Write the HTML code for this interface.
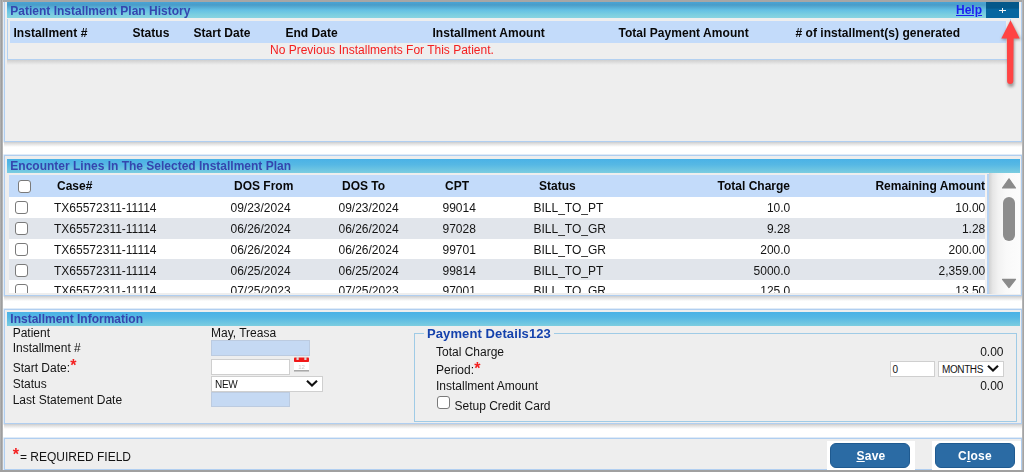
<!DOCTYPE html>
<html><head><meta charset="utf-8">
<style>
*{box-sizing:border-box;margin:0;padding:0}
html,body{width:1024px;height:472px;overflow:hidden}
#wrap{position:absolute;left:0;top:0;width:1024px;height:472px;filter:blur(0.3px)}
body{position:relative;background:#ffffff;font-family:"Liberation Sans",sans-serif;font-size:12px;color:#141414}
.a{position:absolute}
.t{position:absolute;white-space:nowrap;line-height:14px}
.b{font-weight:bold;color:#080808}
.gl{left:0;top:0;width:3px;height:472px;background:linear-gradient(to right,#b8b8b8,#999 60%,#c8c8c8)}
.gt{left:0;top:0;width:1024px;height:2px;background:#a6a6a6}
.gr{left:1022px;top:0;width:2px;height:472px;background:linear-gradient(to right,#c0c0c0,#9a9a9a)}
.gb{left:0;top:470px;width:1024px;height:2px;background:#a0a0a0}
.panel{position:absolute;background:#eeeeee;border:1px solid #b0cef0;box-shadow:0 0 0 0.6px rgba(180,208,240,0.7)}
.hdr{position:absolute;background:linear-gradient(to bottom,#4ab2e6 0%,#56b8e4 40%,#7ccde0 100%)}
.hdr1{background:linear-gradient(to bottom,#48a4d6 0%,#4a9cc8 18%,#64c0e4 50%,#7ccfe0 80%,#88d4e2 100%)}
.hdrt{position:absolute;white-space:nowrap;font-weight:bold;color:#3446ae;font-size:12px;line-height:14px}
.colh{position:absolute;background:#c3dbfa}
.row{position:absolute;left:9px;width:977px}
.cb{position:absolute;width:13px;height:13px;border:1px solid #7a7a7a;border-radius:3px;background:#fff}
.red{color:#f42020}
.inp{position:absolute;border:1px solid #cfcfcf;background:#fff}
.inpb{position:absolute;border:1px solid #bccbe0;background:#c5d9f3}
.btn{position:absolute;background:#2b6ba4;border-radius:6px;color:#fff;font-weight:bold;font-size:12px;letter-spacing:0.25px;text-align:center;border:1px solid #1f5a90}
.shadow{position:absolute;height:5px;background:linear-gradient(to bottom,#cfcfcf,rgba(255,255,255,0))}
</style></head><body><div id="wrap">


<!-- ============ PANEL 1 ============ -->
<div class="panel" style="left:4px;top:1px;width:1018px;height:141px"></div>
<div class="hdr hdr1" style="left:7px;top:2px;width:1012px;height:16.2px"></div>
<div class="hdrt" style="left:10.3px;top:3.5px">Patient Installment Plan History</div>
<div class="t b" style="left:956px;top:3px;color:#1c1ef0;text-decoration:underline">Help</div>
<div class="a" style="left:985.8px;top:2px;width:33.6px;height:15.8px;background:linear-gradient(to bottom,#05588a 0%,#05588a 38%,#0766a0 45%,#0766a0 100%)"></div>
<div class="a" style="left:999.2px;top:10px;width:6.4px;height:1.4px;background:#f4f4f4"></div>
<div class="a" style="left:1001.7px;top:7.9px;width:1.4px;height:5.4px;background:#f4f4f4"></div>
<div class="a" style="left:7px;top:19px;width:1004px;height:41px;background:#eeeeee;border:1px solid #b3d0f0;border-top:none"></div>
<div class="shadow" style="left:7px;top:60px;width:1004px"></div>
<div class="colh" style="left:10px;top:20.7px;width:996px;height:22px"></div>
<div class="t b" style="left:13.4px;top:25.8px;letter-spacing:0.05px">Installment #</div>
<div class="t b" style="left:132.4px;top:25.8px;letter-spacing:0.05px">Status</div>
<div class="t b" style="left:193.4px;top:25.8px;letter-spacing:0.05px">Start Date</div>
<div class="t b" style="left:285.4px;top:25.8px;letter-spacing:0.05px">End Date</div>
<div class="t b" style="left:432.4px;top:25.8px;letter-spacing:0.05px">Installment Amount</div>
<div class="t b" style="left:618.4px;top:25.8px;letter-spacing:0.05px">Total Payment Amount</div>
<div class="t b" style="left:795.4px;top:25.8px;letter-spacing:0.05px">&#35; of installment(s) generated</div>
<div class="t red" style="left:270px;top:42.7px">No Previous Installments For This Patient.</div>

<div class="shadow" style="left:4px;top:142px;width:1018px"></div>

<!-- ============ PANEL 2 ============ -->
<div class="panel" style="left:4px;top:155px;width:1018px;height:141px"></div>
<div class="hdr" style="left:7px;top:159px;width:1013px;height:13.8px"></div>
<div class="hdrt" style="left:10.3px;top:159px">Encounter Lines In The Selected Installment Plan</div>
<div class="colh" style="left:9px;top:174.8px;width:976px;height:21.8px"></div>
<div class="cb" style="left:18px;top:180px"></div>
<div class="t b" style="left:57px;top:179px">Case#</div>
<div class="t b" style="left:234px;top:179px">DOS From</div>
<div class="t b" style="left:342px;top:179px">DOS To</div>
<div class="t b" style="left:445px;top:179px">CPT</div>
<div class="t b" style="left:539px;top:179px">Status</div>
<div class="t b" style="left:690px;top:179px;width:100px;text-align:right">Total Charge</div>
<div class="t b" style="left:835px;top:179px;width:150px;text-align:right">Remaining Amount</div>

<div class="a" style="left:9px;top:196.5px;width:976px;height:96px;overflow:hidden">
<div class="a" style="left:0;top:0.0px;width:977px;height:21px;background:#ffffff">
<div class="cb" style="left:6px;top:4.5px"></div>
<div class="t" style="left:45px;top:4.6px">TX65572311-11114</div>
<div class="t" style="left:221.5px;top:4.6px">09/23/2024</div>
<div class="t" style="left:329.5px;top:4.6px">09/23/2024</div>
<div class="t" style="left:433.5px;top:4.6px">99014</div>
<div class="t" style="left:524.5px;top:4.6px">BILL_TO_PT</div>
<div class="t" style="left:681.3px;top:4.6px;width:100px;text-align:right">10.0</div>
<div class="t" style="left:876.3px;top:4.6px;width:100px;text-align:right">10.00</div>
</div>
<div class="a" style="left:0;top:21.0px;width:977px;height:21px;background:#e1e5eb">
<div class="cb" style="left:6px;top:4.5px"></div>
<div class="t" style="left:45px;top:4.6px">TX65572311-11114</div>
<div class="t" style="left:221.5px;top:4.6px">06/26/2024</div>
<div class="t" style="left:329.5px;top:4.6px">06/26/2024</div>
<div class="t" style="left:433.5px;top:4.6px">97028</div>
<div class="t" style="left:524.5px;top:4.6px">BILL_TO_GR</div>
<div class="t" style="left:681.3px;top:4.6px;width:100px;text-align:right">9.28</div>
<div class="t" style="left:876.3px;top:4.6px;width:100px;text-align:right">1.28</div>
</div>
<div class="a" style="left:0;top:42.0px;width:977px;height:21px;background:#ffffff">
<div class="cb" style="left:6px;top:4.5px"></div>
<div class="t" style="left:45px;top:4.6px">TX65572311-11114</div>
<div class="t" style="left:221.5px;top:4.6px">06/26/2024</div>
<div class="t" style="left:329.5px;top:4.6px">06/26/2024</div>
<div class="t" style="left:433.5px;top:4.6px">99701</div>
<div class="t" style="left:524.5px;top:4.6px">BILL_TO_GR</div>
<div class="t" style="left:681.3px;top:4.6px;width:100px;text-align:right">200.0</div>
<div class="t" style="left:876.3px;top:4.6px;width:100px;text-align:right">200.00</div>
</div>
<div class="a" style="left:0;top:62.5px;width:977px;height:21px;background:#e1e5eb">
<div class="cb" style="left:6px;top:4.5px"></div>
<div class="t" style="left:45px;top:4.6px">TX65572311-11114</div>
<div class="t" style="left:221.5px;top:4.6px">06/25/2024</div>
<div class="t" style="left:329.5px;top:4.6px">06/25/2024</div>
<div class="t" style="left:433.5px;top:4.6px">99814</div>
<div class="t" style="left:524.5px;top:4.6px">BILL_TO_PT</div>
<div class="t" style="left:681.3px;top:4.6px;width:100px;text-align:right">5000.0</div>
<div class="t" style="left:876.3px;top:4.6px;width:100px;text-align:right">2,359.00</div>
</div>
<div class="a" style="left:0;top:83.30000000000001px;width:977px;height:21px;background:#ffffff">
<div class="cb" style="left:6px;top:4.5px"></div>
<div class="t" style="left:45px;top:4.6px">TX65572311-11114</div>
<div class="t" style="left:221.5px;top:4.6px">07/25/2023</div>
<div class="t" style="left:329.5px;top:4.6px">07/25/2023</div>
<div class="t" style="left:433.5px;top:4.6px">97001</div>
<div class="t" style="left:524.5px;top:4.6px">BILL_TO_GR</div>
<div class="t" style="left:681.3px;top:4.6px;width:100px;text-align:right">125.0</div>
<div class="t" style="left:876.3px;top:4.6px;width:100px;text-align:right">13.50</div>
</div>
</div>

<!-- scrollbar -->
<div class="a" style="left:985px;top:174px;width:2px;height:119px;background:#f6f3f2"></div>
<div class="a" style="left:987px;top:173.5px;width:1.5px;height:120px;background:#b8d4f4"></div>
<div class="a" style="left:988.5px;top:173px;width:31px;height:120.5px;background:linear-gradient(to right,#d2d2d2,#e6e6e6 12%,#f2f2f2 30%,#f9f9f9 55%,#fcfcfc)"></div>
<svg class="a" style="left:1000px;top:176px" width="18" height="16" viewBox="0 0 18 16"><path d="M2.5 12 L9 2.8 L15.5 12 Z" fill="#8a8a8a" stroke="#8a8a8a" stroke-width="1.2" stroke-linejoin="round"/></svg>
<div class="a" style="left:1003.3px;top:197px;width:11.5px;height:44px;border-radius:6px;background:#8c8c8c"></div>
<svg class="a" style="left:1000px;top:274.5px" width="18" height="16" viewBox="0 0 18 16"><path d="M2.5 4.3 L9 12.6 L15.5 4.3 Z" fill="#8a8a8a" stroke="#8a8a8a" stroke-width="1.2" stroke-linejoin="round"/></svg>

<div class="shadow" style="left:4px;top:296px;width:1018px"></div>

<!-- ============ PANEL 3 ============ -->
<div class="panel" style="left:4px;top:309px;width:1018px;height:115px"></div>
<div class="hdr" style="left:7px;top:312px;width:1013px;height:13.8px"></div>
<div class="hdrt" style="left:10.3px;top:312px">Installment Information</div>
<div class="t" style="left:12.7px;top:326px">Patient</div>
<div class="t" style="left:12.7px;top:341.3px">Installment #</div>
<div class="t" style="left:12.7px;top:361px">Start Date:</div>
<div class="t red b" style="left:70.3px;top:358.5px;font-size:16px">*</div>
<div class="t" style="left:12.7px;top:377px">Status</div>
<div class="t" style="left:12.7px;top:393px">Last Statement Date</div>
<div class="t" style="left:211px;top:326px">May, Treasa</div>
<div class="inpb" style="left:211px;top:340px;width:99px;height:16px"></div>
<div class="inp" style="left:211px;top:359px;width:79px;height:16px"></div>
<svg class="a" style="left:293px;top:356px" width="17" height="16" viewBox="0 0 17 16">
<rect x="1" y="2" width="15" height="13.5" rx="1" fill="#ffffff"/>
<rect x="1" y="14" width="15" height="1.6" fill="#a8a8a8"/>
<rect x="1" y="1.5" width="15" height="4.5" rx="0.8" fill="#f01818"/>
<rect x="3.5" y="0.8" width="2.2" height="3.2" fill="#d8d8d8"/>
<rect x="11.3" y="0.8" width="2.2" height="3.2" fill="#d8d8d8"/>
<text x="8.5" y="12.5" font-family="Liberation Sans" font-size="6" fill="#c8c8c8" text-anchor="middle">12</text>
</svg>
<div class="inp" style="left:211px;top:376px;width:112px;height:16px"></div>
<div class="t" style="left:215px;top:378.2px;font-size:10px;letter-spacing:-0.3px">NEW</div>
<svg class="a" style="left:305px;top:379px" width="14" height="9" viewBox="0 0 14 9"><path d="M2 1.8 L7 6.6 L12 1.8" fill="none" stroke="#111" stroke-width="2.1"/></svg>
<div class="inpb" style="left:211px;top:392px;width:79px;height:15px"></div>

<div class="a" style="left:414px;top:333px;width:603px;height:88.5px;border:1px solid #9fcbe6"></div>
<div class="a" style="left:423.8px;top:326px;width:130px;height:14px;background:#eeeeee"></div>
<div class="t b" style="left:427px;top:326.8px;font-size:13px;color:#1542ac;letter-spacing:0.1px">Payment Details123</div>
<div class="t" style="left:436px;top:345px">Total Charge</div>
<div class="t" style="left:436px;top:363px">Period:</div>
<div class="t red b" style="left:474.2px;top:361.5px;font-size:16px">*</div>
<div class="t" style="left:436px;top:379px">Installment Amount</div>
<div class="cb" style="left:437px;top:396px"></div>
<div class="t" style="left:454.5px;top:399px">Setup Credit Card</div>
<div class="t" style="left:903.5px;top:345px;width:100px;text-align:right">0.00</div>
<div class="inp" style="left:890px;top:361px;width:45px;height:16px"></div>
<div class="t" style="left:892.5px;top:363px;font-size:10px">0</div>
<div class="inp" style="left:938px;top:361px;width:66px;height:16px"></div>
<div class="t" style="left:942px;top:363px;font-size:10px;letter-spacing:-0.4px">MONTHS</div>
<svg class="a" style="left:986px;top:364px" width="14" height="9" viewBox="0 0 14 9"><path d="M2 1.8 L7 6.6 L12 1.8" fill="none" stroke="#111" stroke-width="2.1"/></svg>
<div class="t" style="left:903.5px;top:379px;width:100px;text-align:right">0.00</div>

<div class="shadow" style="left:4px;top:424px;width:1018px"></div>

<!-- ============ FOOTER ============ -->
<div class="panel" style="left:4px;top:438px;width:1018px;height:32px"></div>
<div class="t red b" style="left:12.8px;top:448px;font-size:16px">*</div>
<div class="t" style="left:20px;top:450px">= REQUIRED FIELD</div>
<div class="a" style="left:827px;top:441px;width:88px;height:29px;background:#fff"></div>
<div class="a" style="left:932px;top:441px;width:89px;height:29px;background:#fff"></div>
<div class="btn" style="left:830px;top:443px;width:80px;height:25px;line-height:25px;text-indent:2px"><u>S</u>ave</div>
<div class="btn" style="left:935px;top:443px;width:80px;height:25px;line-height:25px">C<u>l</u>ose</div>

<!-- page frame -->
<div class="a gt"></div>
<div class="a gl"></div>
<div class="a gr"></div>
<div class="a gb"></div>
<svg class="a" style="left:995px;top:15px" width="29" height="75" viewBox="995 15 29 75">
<defs><filter id="sh" x="-50%" y="-20%" width="200%" height="140%"><feGaussianBlur stdDeviation="1.5"/></filter></defs>
<path d="M1011 21.5 L1021 39.8 L1014.3 39.8 L1014.3 83.5 Q1014.3 87 1010.8 87 Q1007.5 87 1007.5 83.5 L1007.5 39.8 L1001.5 39.8 Z" fill="#555" opacity="0.55" filter="url(#sh)"/>
<path d="M1010.5 20.2 L1019.7 38.4 L1013.6 38.4 L1013.3 81 Q1013.3 84 1010.2 84 Q1007.1 84 1007.1 81 L1006.9 38.4 L1001.3 38.4 Z" fill="#ff4444"/>
</svg>
</div></body></html>
